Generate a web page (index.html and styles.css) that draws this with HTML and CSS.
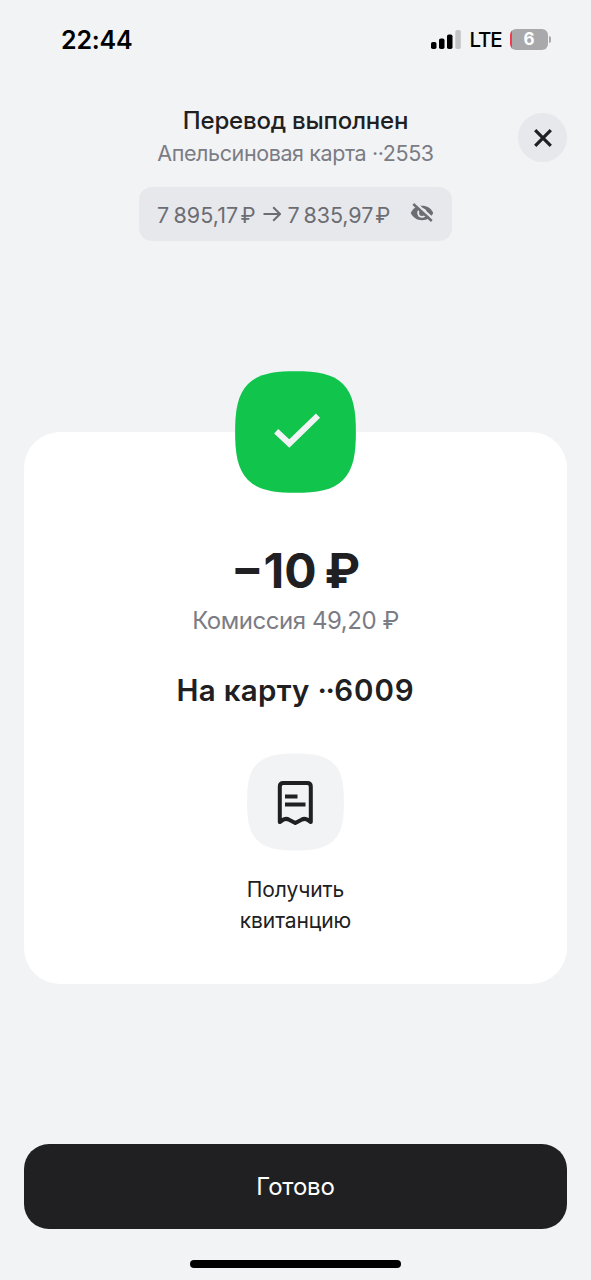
FILE: index.html
```html
<!DOCTYPE html>
<html lang="ru">
<head>
<meta charset="utf-8">
<title>Перевод выполнен</title>
<link rel="stylesheet" href="styles.css">
</head>
<body>
<div class="screen">
  <div class="status">
    <span class="clock">22:44</span>
    <div class="indicators">
      <svg class="signal" width="30" height="20" viewBox="0 0 30 20">
        <rect x="0" y="12" width="5.5" height="7" rx="1.8"/>
        <rect x="8" y="8.500" width="5.500" height="10.500" rx="1.800"/>
        <rect x="16" y="4.500" width="5.500" height="14.500" rx="1.800"/>
        <rect class="muted" x="24.300" y="0" width="5.500" height="19" rx="1.800"/>
      </svg>
      <span class="network">LTE</span>
      <div class="battery"><span class="level">6</span></div>
      <span class="battery-tip"></span>
    </div>
  </div>

  <header class="header">
    <h1 class="title">Перевод выполнен</h1>
    <p class="subtitle">Апельсиновая карта ··2553</p>
    <div class="balance">
      <span class="sum from">7 895,17<span class="rub">₽</span></span>
      <svg class="arrow" width="18" height="16" viewBox="0 0 18 16"><path d="M.5 8H17M10.200 1.200 17 8l-6.800 6.800"/></svg>
      <span class="sum to">7 835,97<span class="rub">₽</span></span>
      <svg class="eye" width="24" height="20" viewBox="0 0 24 20">
        <path class="lid" d="M.8 10C3 5.300 7 2.800 12 2.800S21 5.300 23.200 10C21 14.700 17 17.200 12 17.200S3 14.700.8 10Z"/>
        <circle class="iris" cx="12" cy="10" r="4.800"/>
        <circle class="lid" cx="12" cy="10" r="2.900"/>
        <path class="gap" d="M4.500-.8 24.300 17"/>
        <path class="slash" d="M3.300 1 21.800 18"/>
      </svg>
    </div>
    <button class="close" aria-label="Закрыть">
      <svg width="18" height="18" viewBox="0 0 18 18"><path d="M1.200 1.200l15.600 15.600M16.800 1.200l-15.600 15.600"/></svg>
    </button>
  </header>

  <main class="card">
    <svg class="badge" width="121" height="122" viewBox="0 0 121 122">
      <path class="tile" d="M60.500 .2C82 .2 97.500 2.500 108 13C118.500 23.500 120.900 39.500 120.900 61S118.500 98.500 108 109C97.500 119.500 82 121.800 60.500 121.800S23.500 119.500 13 109C2.500 98.500 .1 82.500 .1 61S2.500 23.500 13 13C23.500 2.500 39 .2 60.500 .2Z"/>
      <path class="tick" d="M41.200 60.200 54.300 72.500 83 44.600"/>
    </svg>
    <div class="amount">−10<span class="amount-rub">₽</span></div>
    <div class="fee">Комиссия 49,20 ₽</div>
    <h2 class="target">На карту <span class="dots">··</span><span class="digits">6009</span></h2>
    <svg class="receipt" width="97" height="98" viewBox="0 0 97 98">
      <path class="receipt-tile" d="M48.500 .5C66 .5 78.500 2.500 87 11C95.500 19.500 96.900 31.500 96.900 49S95.500 78.500 87 87C78.500 95.500 66 97.500 48.500 97.500S18.500 95.500 10 87C1.500 78.500 .1 66.500 .1 49S1.500 19.500 10 11C18.500 2.500 31 .5 48.500 .5Z"/>
      <path class="outline" d="M32.800 69V33.500Q32.800 30 36.300 30H60.300Q63.800 30 63.800 33.500V69L61 67Q57.700 64.800 54.500 66.800L48.300 70 42.100 66.800Q38.900 64.800 35.600 67Z"/>
      <path class="line" d="M38 43.500H50.500M38 51.500H58.500"/>
    </svg>
    <div class="receipt-label">Получить<br>квитанцию</div>
  </main>

  <button class="done">Готово</button>
  <div class="home"></div>
</div>
</body>
</html>
```
FILE: styles.css
```css
* { box-sizing: border-box; }
body { margin: 0; background: #f2f3f5; }
h1, h2, p { margin: 0; }
button { border: 0; padding: 0; font: inherit; }
svg { display: block; fill: none; }

.screen {
  width: 591px;
  height: 1280px;
  display: flex;
  flex-direction: column;
  align-items: center;
  background: #f2f3f5;
  font-family: Inter, "Liberation Sans", sans-serif;
  color: #202022;
  white-space: nowrap;
}

.status {
  width: 100%;
  height: 80px;
  padding: 0 40px 2px 61px;
  display: flex;
  align-items: center;
  justify-content: space-between;
  color: #000;
}
.clock { margin-top: 2px; font-size: 25px; font-weight: 600; letter-spacing: -0.2px; }
.indicators { display: flex; align-items: center; }
.signal { margin-top: 1px; fill: #000; }
.signal .muted { fill: #c3c4c6; }
.network { margin-left: 8px; margin-top: 1px; font-size: 20.500px; font-weight: 500; letter-spacing: -1.100px; }
.battery {
  width: 38px;
  height: 21px;
  margin-left: 9px;
  border-radius: 6px;
  background: linear-gradient(to right, #f33b50 2.500px, #a9a9ab 2.500px);
  text-align: center;
}
.network + .battery { margin-left: 8.500px; }
.level { font-size: 17px; line-height: 21px; font-weight: 700; color: #fff; }
.battery-tip { width: 2px; height: 7px; margin-left: 1px; border-radius: 0 3px 3px 0; background: #a9a9ab; }

.header {
  position: relative;
  width: 100%;
  height: 352px;
  padding-top: 25px;
  display: flex;
  flex-direction: column;
  align-items: center;
}
.title { font-size: 24px; line-height: 32px; font-weight: 500; letter-spacing: -0.2px; }
.subtitle { margin-top: 2px; font-size: 21.500px; line-height: 28px; letter-spacing: -0.400px; color: #7b7c84; }
.balance {
  width: 313px;
  height: 54px;
  margin-top: 20px;
  padding: 2px 18px 0;
  display: flex;
  align-items: center;
  border-radius: 13px;
  background: #e7e8ec;
  font-size: 21.500px;
  color: #6c6d73;
}
.sum { word-spacing: -2px; }
.from { letter-spacing: 0.100px; }
.to { letter-spacing: -0.100px; }
.rub { margin-left: 2px; }
.arrow { margin: 0 7px 2px 7px; stroke: currentColor; stroke-width: 2; }
.eye { margin: 0 0 4px auto; }
.eye .lid { fill: #6c6d73; }
.eye .iris { fill: #e7e8ec; }
.eye .gap { stroke: #e7e8ec; stroke-width: 2.500; }
.eye .slash { stroke: #6c6d73; stroke-width: 2.500; }
.close {
  position: absolute;
  top: 33px;
  right: 24px;
  width: 49px;
  height: 49px;
  display: grid;
  place-items: center;
  border-radius: 50%;
  background: #e7e8ec;
}
.close svg { stroke: #202022; stroke-width: 3.200; }

.card {
  width: 543px;
  height: 552px;
  display: flex;
  flex-direction: column;
  align-items: center;
  border-radius: 36px;
  background: #fff;
}
.badge { margin-top: -61px; }
.tile { fill: #10c44c; }
.tick { stroke: #f2f3f5; stroke-width: 6; }
.amount { margin-top: 48px; font-size: 48px; line-height: 60px; font-weight: 700; }
.amount-rub { margin-left: 8px; }
.fee { margin-top: 4px; font-size: 24px; line-height: 32px; letter-spacing: -0.450px; color: #7b7c84; }
.target { margin-top: 33px; font-size: 29.500px; line-height: 40px; font-weight: 600; letter-spacing: 0.300px; }
.dots { letter-spacing: -1.500px; }
.digits { margin-left: 1px; letter-spacing: 0.900px; }
.receipt { margin-top: 43px; }
.receipt-tile { fill: #f2f3f5; }
.outline { stroke: #202022; stroke-width: 4; stroke-linejoin: round; }
.line { stroke: #202022; stroke-width: 4; }
.receipt-label { margin-top: 24px; font-size: 21px; line-height: 30.500px; letter-spacing: -0.100px; text-align: center; }

.done {
  width: 543px;
  height: 85px;
  margin-top: 159.500px;
  border-radius: 25px;
  background: #202022;
  color: #fff;
  font-size: 24px;
  letter-spacing: -0.200px;
}
.home { width: 211px; height: 8px; margin-top: 31.500px; border-radius: 4px; background: #000; }
```
